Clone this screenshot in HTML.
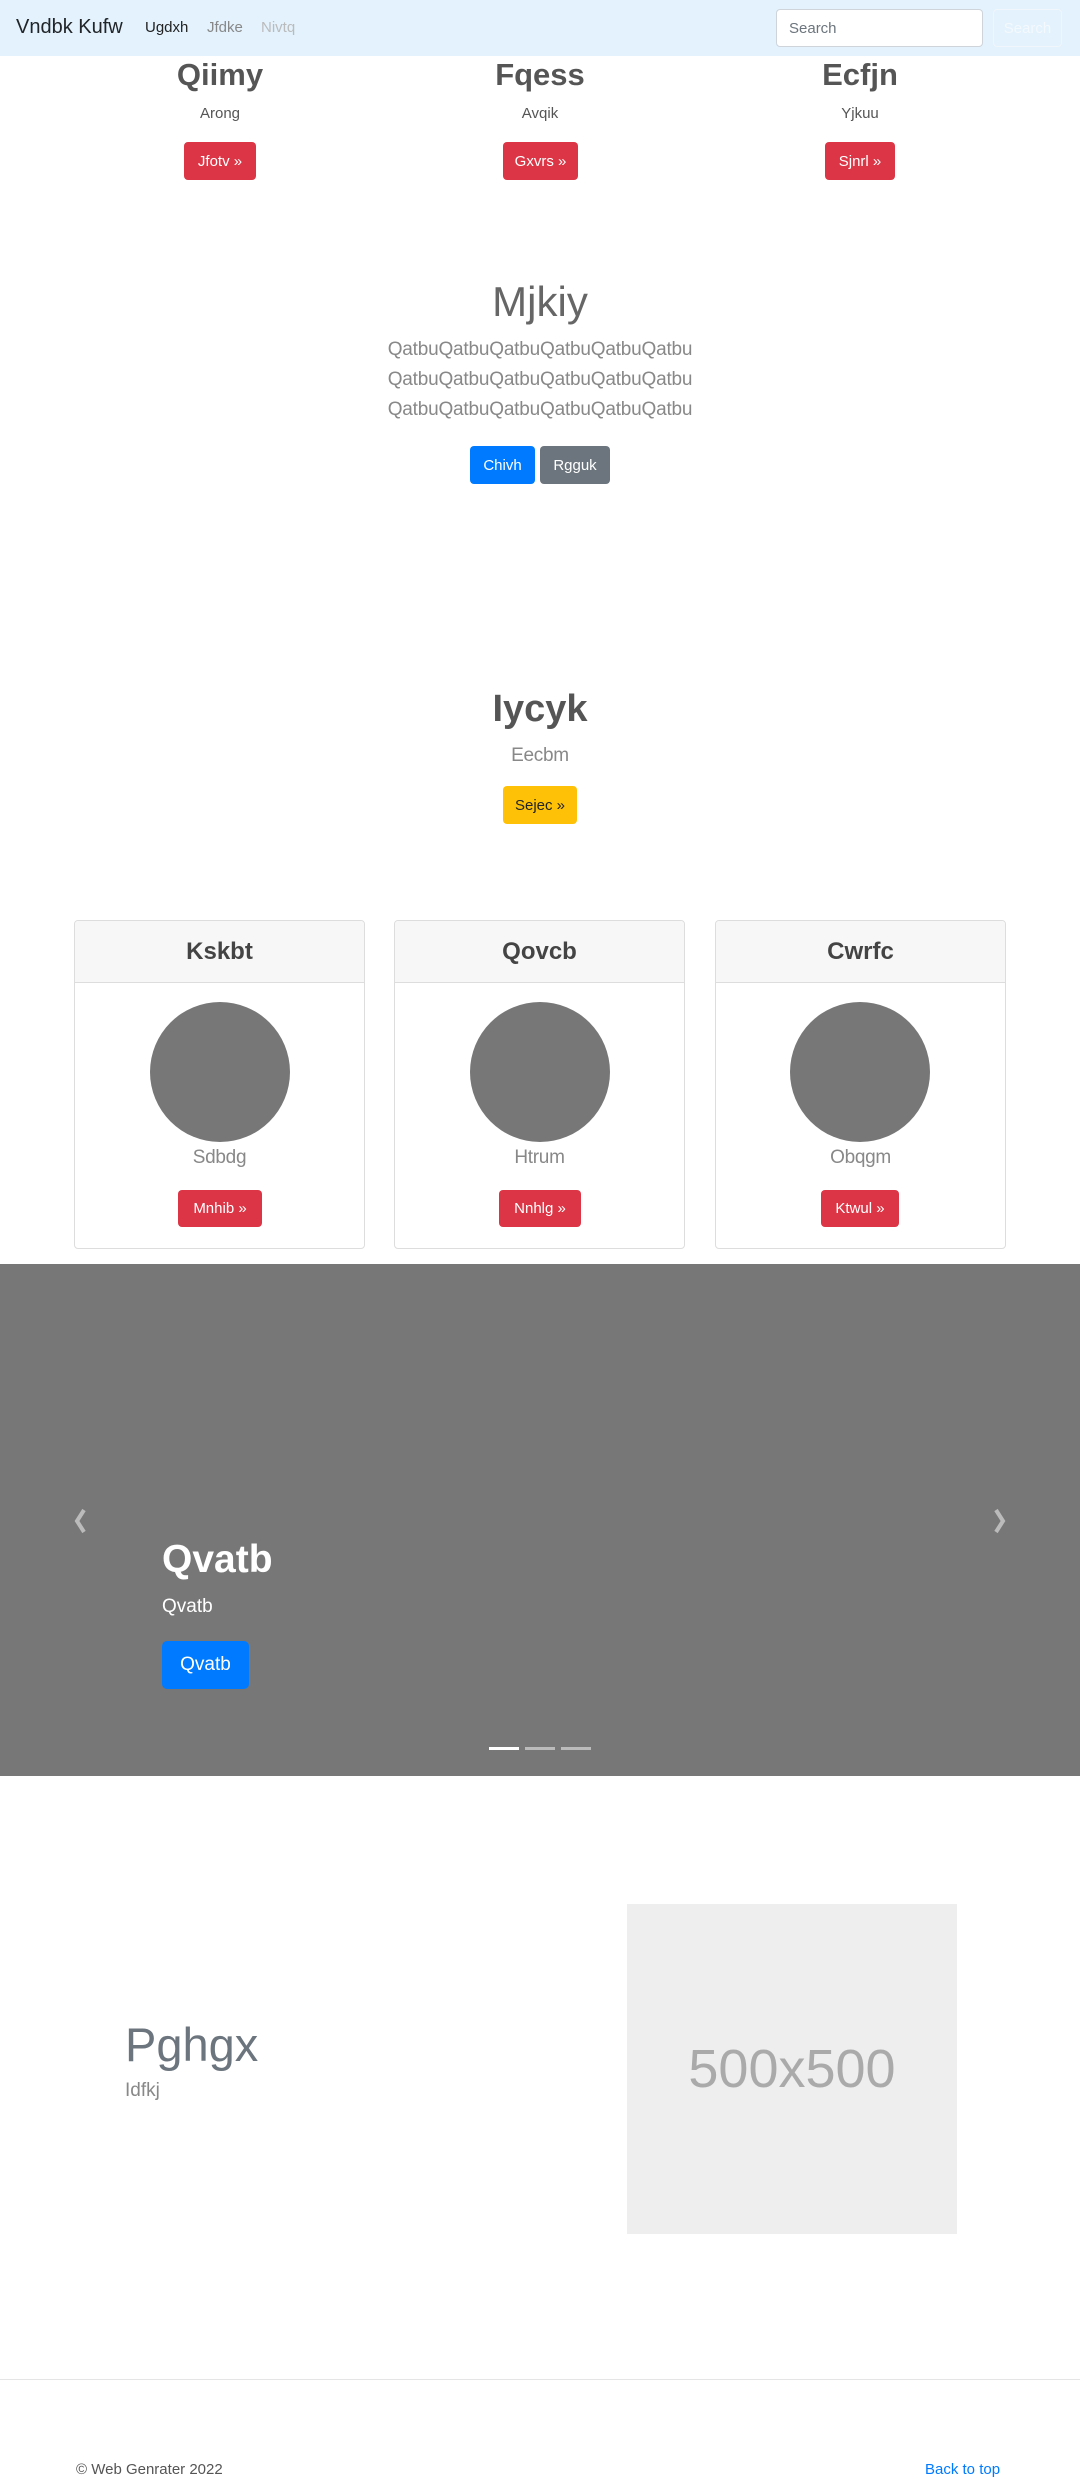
<!DOCTYPE html>
<html><head><meta charset="utf-8"><style>
*{box-sizing:border-box;margin:0;padding:0}
body{width:1080px;height:2482px;position:relative;font-family:"Liberation Sans",sans-serif;color:#212529;background:#fff;overflow:hidden}
.a{position:absolute}
.c{text-align:center}
.btn{position:absolute;color:#fff;border-radius:4px;font-size:15px;display:flex;align-items:center;justify-content:center}
.red{background:#dc3545}
</style></head><body>
<div class="a" style="left:0;top:0;width:1080px;height:56px;background:#e3f2fd"></div>
<div class="a" style="left:16px;top:16px;font-size:20px;color:#212529">Vndbk Kufw</div>
<div class="a" style="left:145px;top:19px;font-size:15px;color:#222">Ugdxh</div>
<div class="a" style="left:207px;top:19px;font-size:15px;color:#888">Jfdke</div>
<div class="a" style="left:261px;top:19px;font-size:15px;color:#bbb">Nivtq</div>
<div class="a" style="left:776px;top:9px;width:207px;height:38px;border:1px solid #ced4da;border-radius:4px;background:#fff;font-size:15px;color:#6c757d;padding:10px 12px">Search</div>
<div class="a" style="left:993px;top:9px;width:69px;height:38px;border:1px solid #f0f6fb;border-radius:4px;font-size:15px;color:#f4f9fd;display:flex;align-items:center;justify-content:center">Search</div>

<div class="a c" style="left:60px;top:57px;width:320px;font-size:31px;font-weight:bold;color:#555">Qiimy</div>
<div class="a c" style="left:380px;top:57px;width:320px;font-size:31px;font-weight:bold;color:#555">Fqess</div>
<div class="a c" style="left:700px;top:57px;width:320px;font-size:31px;font-weight:bold;color:#555">Ecfjn</div>
<div class="a c" style="left:60px;top:105px;width:320px;font-size:15px;color:#555">Arong</div>
<div class="a c" style="left:380px;top:105px;width:320px;font-size:15px;color:#555">Avqik</div>
<div class="a c" style="left:700px;top:105px;width:320px;font-size:15px;color:#555">Yjkuu</div>
<div class="btn red" style="left:184px;top:142px;width:72px;height:38px">Jfotv »</div>
<div class="btn red" style="left:503px;top:142px;width:75px;height:38px">Gxvrs »</div>
<div class="btn red" style="left:825px;top:142px;width:70px;height:38px">Sjnrl »</div>

<div class="a c" style="left:0;top:278px;width:1080px;font-size:42px;font-weight:300;color:#666">Mjkiy</div>
<div class="a c" style="left:0;top:335px;width:1080px;font-size:19px;line-height:30px;color:#888;letter-spacing:-0.2px">QatbuQatbuQatbuQatbuQatbuQatbu<br>QatbuQatbuQatbuQatbuQatbuQatbu<br>QatbuQatbuQatbuQatbuQatbuQatbu</div>
<div class="btn" style="left:470px;top:446px;width:65px;height:38px;background:#007bff">Chivh</div>
<div class="btn" style="left:540px;top:446px;width:70px;height:38px;background:#6c757d">Rgguk</div>

<div class="a c" style="left:0;top:688px;width:1080px;font-size:38px;font-weight:bold;color:#555">Iycyk</div>
<div class="a c" style="left:0;top:745px;width:1080px;font-size:19px;color:#888;letter-spacing:-0.3px">Eecbm</div>
<div class="btn" style="left:503px;top:786px;width:74px;height:38px;background:#ffc107;color:#212529">Sejec »</div>

<div class="a" style="left:74px;top:920px;width:291px;height:329px;border:1px solid #ddd;border-radius:4px;overflow:hidden"><div style="height:62px;background:#f7f7f7;border-bottom:1px solid #ddd;font-size:24px;font-weight:bold;color:#444;text-align:center;line-height:62px">Kskbt</div></div>
<div class="a" style="left:394px;top:920px;width:291px;height:329px;border:1px solid #ddd;border-radius:4px;overflow:hidden"><div style="height:62px;background:#f7f7f7;border-bottom:1px solid #ddd;font-size:24px;font-weight:bold;color:#444;text-align:center;line-height:62px">Qovcb</div></div>
<div class="a" style="left:715px;top:920px;width:291px;height:329px;border:1px solid #ddd;border-radius:4px;overflow:hidden"><div style="height:62px;background:#f7f7f7;border-bottom:1px solid #ddd;font-size:24px;font-weight:bold;color:#444;text-align:center;line-height:62px">Cwrfc</div></div>
<div class="a" style="left:150px;top:1002px;width:140px;height:140px;border-radius:50%;background:#777"></div>
<div class="a" style="left:470px;top:1002px;width:140px;height:140px;border-radius:50%;background:#777"></div>
<div class="a" style="left:790px;top:1002px;width:140px;height:140px;border-radius:50%;background:#777"></div>
<div class="a c" style="left:74px;top:1147px;width:291px;font-size:19px;color:#888;letter-spacing:-0.3px">Sdbdg</div>
<div class="a c" style="left:394px;top:1147px;width:291px;font-size:19px;color:#888;letter-spacing:-0.3px">Htrum</div>
<div class="a c" style="left:715px;top:1147px;width:291px;font-size:19px;color:#888;letter-spacing:-0.3px">Obqgm</div>
<div class="btn red" style="left:178px;top:1190px;width:84px;height:37px">Mnhib »</div>
<div class="btn red" style="left:499px;top:1190px;width:82px;height:37px">Nnhlg »</div>
<div class="btn red" style="left:821px;top:1190px;width:78px;height:37px">Ktwul »</div>

<div class="a" style="left:0;top:1264px;width:1080px;height:512px;background:#777"></div>
<svg class="a" style="left:72px;top:1508px" width="18" height="26" viewBox="0 0 18 26"><path d="M12 2 L5 13 L12 24" stroke="#bbb" stroke-width="4" fill="none"/></svg>
<svg class="a" style="left:990px;top:1508px" width="18" height="26" viewBox="0 0 18 26"><path d="M6 2 L13 13 L6 24" stroke="#bbb" stroke-width="4" fill="none"/></svg>
<div class="a" style="left:162px;top:1538px;font-size:39px;font-weight:bold;color:#fff">Qvatb</div>
<div class="a" style="left:162px;top:1596px;font-size:19px;color:#fff">Qvatb</div>
<div class="btn" style="left:162px;top:1641px;width:87px;height:48px;background:#007bff;font-size:19px;border-radius:5px">Qvatb</div>
<div class="a" style="left:489px;top:1747px;width:30px;height:3px;background:#fff"></div>
<div class="a" style="left:525px;top:1747px;width:30px;height:3px;background:#bbb"></div>
<div class="a" style="left:561px;top:1747px;width:30px;height:3px;background:#bbb"></div>

<div class="a" style="left:125px;top:2017px;font-size:47px;font-weight:300;color:#6c757d">Pghgx</div>
<div class="a" style="left:125px;top:2080px;font-size:19px;color:#888">Idfkj</div>
<div class="a" style="left:627px;top:1904px;width:330px;height:330px;background:#eee;display:flex;align-items:center;justify-content:center;font-size:54px;color:#aaa">500x500</div>

<div class="a" style="left:0;top:2379px;width:1080px;height:1px;background:#e5e5e5"></div>
<div class="a" style="left:76px;top:2461px;font-size:15px;color:#555">© Web Genrater 2022</div>
<div class="a" style="left:925px;top:2461px;font-size:15px;color:#007bff">Back to top</div>
</body></html>
